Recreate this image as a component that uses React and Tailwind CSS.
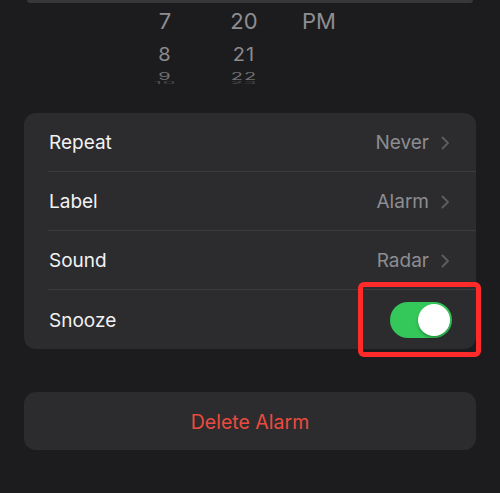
import React from "react";

const Chevron = () => (
  <svg width="9" height="14" viewBox="0 0 9 14" fill="none" className="ml-[12px]">
    <path d="M1.5 1.5 L7 7 L1.5 12.5" stroke="#5c5c60" strokeWidth="2" strokeLinecap="round" strokeLinejoin="round" />
  </svg>
);

const Row = ({ label, value, last, children }) => (
  <div
    className={
      "ml-[24px] pl-[1px] pr-[26px] h-[59px] flex items-center justify-between " +
      (last ? "" : "border-b border-[#3b3b3e]")
    }
  >
    <span className="text-[19px] leading-[24px] pt-[2px] text-[#f2f2f4]">{label}</span>
    {children ? (
      children
    ) : (
      <span className="flex items-center pt-[2px]">
        <span className="text-[19px] leading-[24px] text-[#8d8d92]">{value}</span>
        <Chevron />
      </span>
    )}
  </div>
);

export default function App() {
  return (
    <div
      className="relative w-[500px] h-[493px] overflow-hidden bg-[#1c1c1e]"
      style={{ fontFamily: "Inter, 'Noto Sans', sans-serif" }}
    >
      <div className="mx-[27px] h-[3px] rounded-b-[4px] bg-[#37373a]" />

      <div className="flex pl-[145px] h-[110px] pt-[5px]">
        <div className="w-[40px] flex flex-col items-center">
          <span className="text-[22px] leading-[26px] text-[#8e8e92]">7</span>
          <span className="mt-[10px] text-[20px] leading-[22px] tracking-[1px] text-[#8a8a8d] scale-y-[0.92]">8</span>
          <span className="mt-[1px] text-[20px] leading-[18px] tracking-[1px] text-[#707074] scale-y-[0.5]">9</span>
          <span className="-mt-[7px] text-[20px] leading-[10px] tracking-[1px] text-[#4d4d50] scale-y-[0.15]">10</span>
        </div>
        <div className="ml-[39px] w-[40px] flex flex-col items-center">
          <span className="text-[22px] leading-[26px] text-[#8e8e92]">20</span>
          <span className="mt-[10px] text-[20px] leading-[22px] tracking-[1px] text-[#8a8a8d] scale-y-[0.92]">21</span>
          <span className="mt-[1px] text-[20px] leading-[18px] tracking-[1px] text-[#707074] scale-y-[0.5]">22</span>
          <span className="-mt-[7px] text-[20px] leading-[10px] tracking-[1px] text-[#4d4d50] scale-y-[0.15]">23</span>
        </div>
        <div className="ml-[35px] w-[40px] flex flex-col items-center">
          <span className="text-[22px] leading-[26px] text-[#8e8e92]">PM</span>
        </div>
      </div>

      <div className="mx-[24px] rounded-[12px] bg-[#2c2c2e]">
        <Row label="Repeat" value="Never" />
        <Row label="Label" value="Alarm" />
        <Row label="Sound" value="Radar" />
        <Row label="Snooze" last>
          <div className="w-[62px] h-[36px] rounded-full bg-[#34c759] flex items-center justify-end pr-[2px] -mr-[2px]">
            <div className="w-[32px] h-[32px] rounded-full bg-white shadow-[0_2px_3px_rgba(0,0,0,0.25)]" />
          </div>
        </Row>
      </div>

      <div className="mx-[24px] mt-[43px] h-[58px] rounded-[12px] bg-[#2c2c2e] flex items-center justify-center">
        <span className="text-[19.5px] leading-[24px] pt-[2px] text-[#eb4b3f]">Delete Alarm</span>
      </div>

      <div className="absolute left-[358px] top-[282px] w-[123px] h-[75px] border-[5px] border-[#ff2b2b] rounded-[6px]" />
    </div>
  );
}
